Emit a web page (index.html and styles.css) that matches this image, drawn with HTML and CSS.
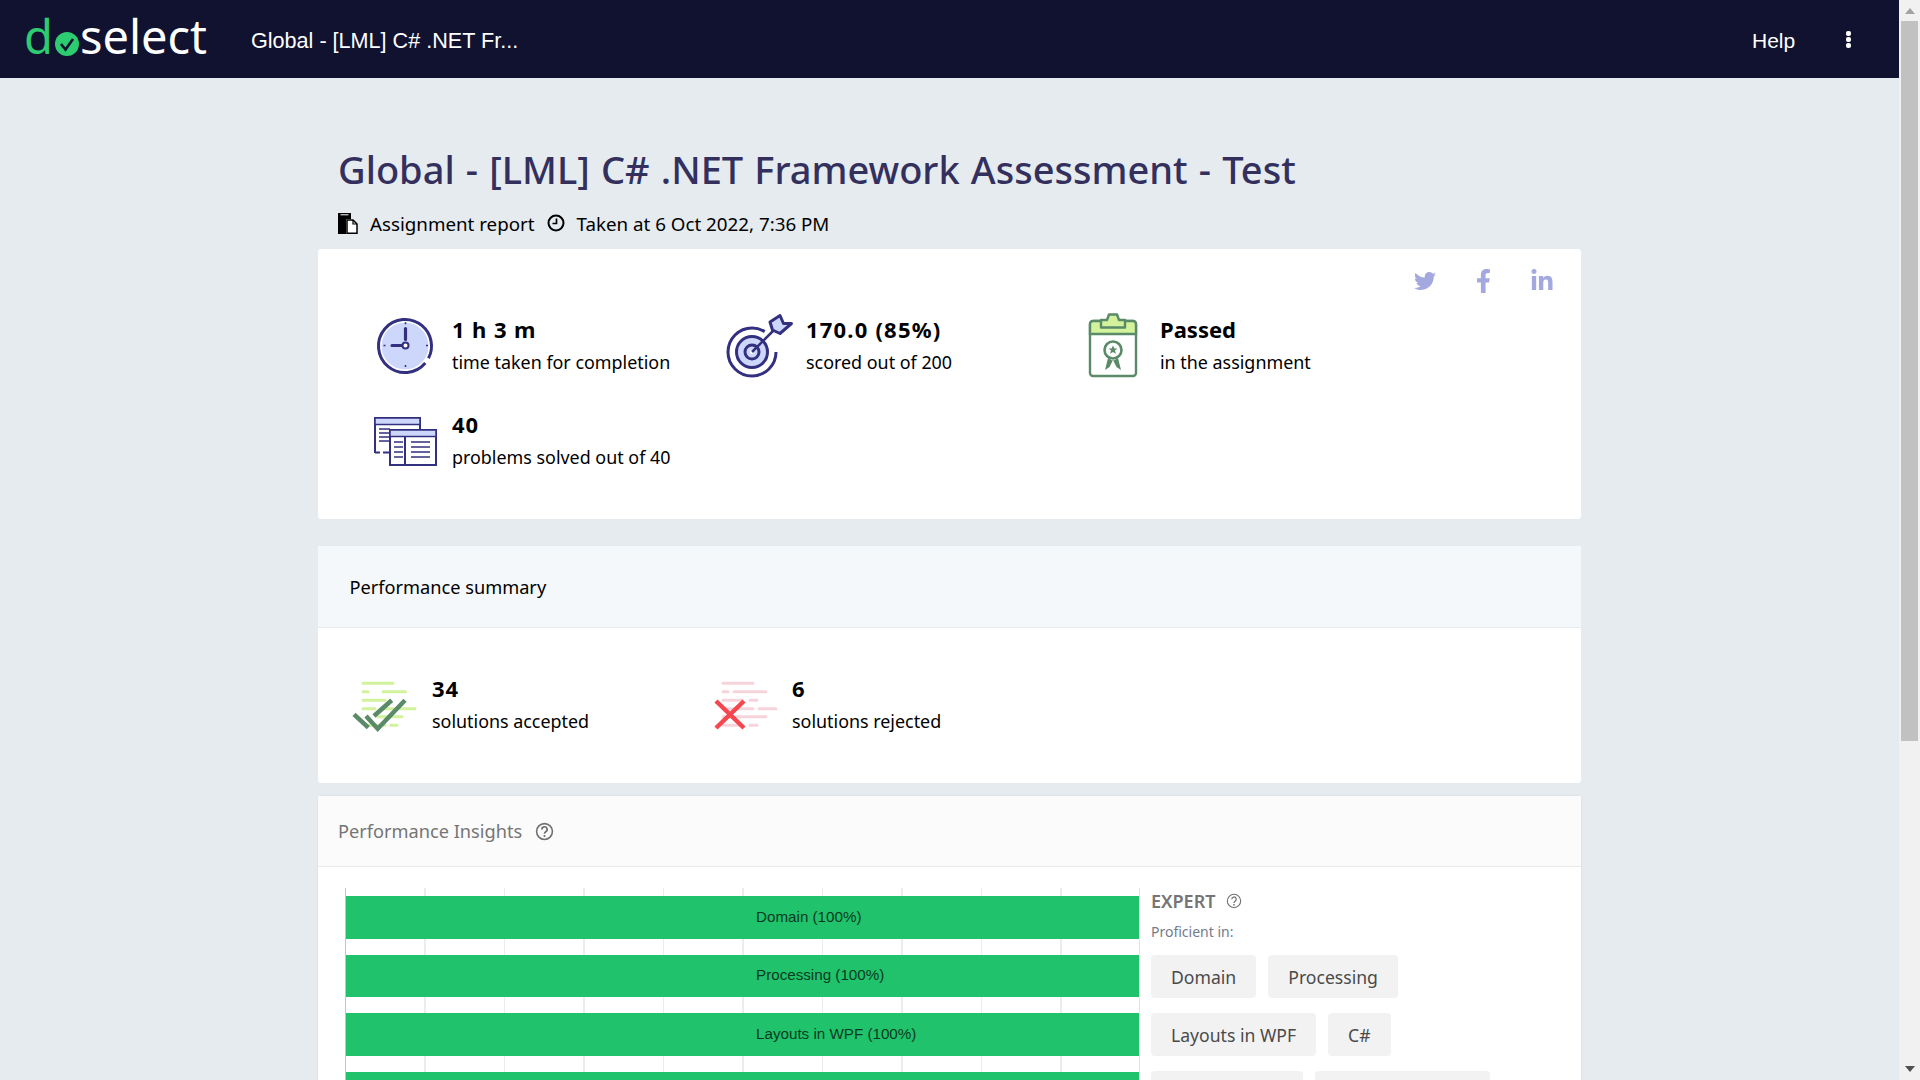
FILE: index.html
```html
<!DOCTYPE html>
<html lang="en">
<head>
<meta charset="utf-8">
<title>Assignment report</title>
<link rel="stylesheet" href="styles.css">
</head>
<body>
<div class="viewport">
  <header class="topbar">
    <div class="logo"><span class="logo-d">d</span><svg class="logo-o" viewBox="0 0 24 24"><circle cx="12" cy="12" r="12" fill="#2ecc71"/><path d="M6 12l4.500 5.500L18 7" fill="none" stroke="#10122f" stroke-width="2.600"/></svg><span class="logo-select">select</span></div>
    <div class="topbar-title">Global - [LML] C# .NET Fr...</div>
    <div class="topbar-help">Help</div>
    <div class="kebab"><i></i><i></i><i></i></div>
  </header>

  <main class="page">
    <h1 class="page-title">Global - [LML] C# .NET Framework Assessment - Test</h1>
    <div class="meta">
      <svg class="meta-doc" viewBox="0 0 20 22"><path d="M0 1h13v6H8v15H0z" fill="#000"/><path d="M2.500 2.800h8" stroke="#fff" stroke-width="1"/><path d="M9 8h6l4 4v9.300H9z" fill="#fff" stroke="#000" stroke-width="1.500"/><path d="M15 8v4h4" fill="none" stroke="#000" stroke-width="1.200"/></svg>
      <span>Assignment report</span>
      <svg class="meta-clock" viewBox="0 0 18 18"><circle cx="9" cy="9" r="7.500" fill="none" stroke="#000" stroke-width="2"/><path d="M9.500 4.500V9.500H5.500" fill="none" stroke="#000" stroke-width="1.700"/></svg>
      <span>Taken at 6 Oct 2022, 7:36 PM</span>
    </div>

    <section class="card stats-card">
      <div class="social">
        <svg class="soc-tw" viewBox="0 0 512 512"><path d="M459.37 151.716c.325 4.548.325 9.097.325 13.645 0 138.72-105.583 298.558-298.558 298.558-59.452 0-114.68-17.219-161.137-47.106 8.447.974 16.568 1.299 25.34 1.299 49.055 0 94.213-16.568 130.274-44.832-46.132-.975-84.792-31.188-98.112-72.772 6.498.974 12.995 1.624 19.818 1.624 9.421 0 18.843-1.3 27.614-3.573-48.081-9.747-84.143-51.98-84.143-102.985v-1.299c13.969 7.797 30.214 12.67 47.431 13.319-28.264-18.843-46.781-51.005-46.781-87.391 0-19.492 5.197-37.36 14.294-52.954 51.655 63.675 129.3 105.258 216.365 109.807-1.624-7.797-2.599-15.918-2.599-24.04 0-57.828 46.782-104.934 104.934-104.934 30.213 0 57.502 12.67 76.67 33.137 23.715-4.548 46.456-13.32 66.599-25.34-7.798 24.366-24.366 44.833-46.132 57.827 21.117-2.273 41.584-8.122 60.426-16.243-14.292 20.791-32.161 39.308-52.628 54.253z"/></svg>
        <svg class="soc-fb" viewBox="0 0 320 512"><path d="M279.14 288l14.22-92.66h-88.91v-60.13c0-25.35 12.42-50.06 52.24-50.06h40.42V6.26S260.43 0 225.36 0c-73.22 0-121.08 44.38-121.08 124.72v70.62H22.89V288h81.39v224h100.17V288z"/></svg>
        <svg class="soc-in" viewBox="0 0 448 512"><path d="M100.28 448H7.4V148.9h92.88zM53.79 108.1C24.09 108.1 0 83.5 0 53.8a53.79 53.79 0 0 1 107.58 0c0 29.7-24.1 54.3-53.79 54.3zM447.9 448h-92.68V302.4c0-34.7-.7-79.2-48.29-79.2-48.29 0-55.69 37.7-55.69 76.7V448h-92.78V148.9h89.08v40.8h1.3c12.4-23.5 42.69-48.3 87.88-48.3 94 0 111.28 61.9 111.28 142.3V448z"/></svg>
      </div>
      <div class="stats-grid">
        <div class="stat">
          <svg class="stat-icon" viewBox="0 0 64 64"><circle cx="32" cy="32" r="23.500" fill="#cdd7fb"/><circle cx="32" cy="32" r="26.500" fill="none" stroke="#32307f" stroke-width="3" stroke-dasharray="159.600 6.900" transform="rotate(40 32 32)"/><path d="M32.500 14.500v11M28.500 31.500H19" fill="none" stroke="#32307f" stroke-width="3.200" stroke-linecap="round"/><circle cx="32.500" cy="31.500" r="3" fill="#fff" stroke="#32307f" stroke-width="2"/><path d="M32.500 8.300v2M32.500 51v2M10.500 31.500h2M53 31.500h2" stroke="#32307f" stroke-width="1.500"/></svg>
          <div class="stat-text"><b class="num">1 h 3 m</b><span>time taken for completion</span></div>
        </div>
        <div class="stat">
          <svg class="stat-icon" viewBox="0 0 64 64"><circle cx="25" cy="38" r="24" fill="none" stroke="#32307f" stroke-width="3" stroke-dasharray="125.700 25.100"/><circle cx="25" cy="38" r="15.500" fill="#cdd7fb" stroke="#32307f" stroke-width="3"/><circle cx="25" cy="38" r="7" fill="#cdd7fb" stroke="#32307f" stroke-width="3"/><circle cx="25" cy="38" r="2" fill="#fff"/><path d="M25 38L47 16" stroke="#32307f" stroke-width="2.500"/><path d="M53 1.500l3.500 8h8L53 19.500l-7.500-3.500-2.500-8z" fill="#cdd7fb" stroke="#32307f" stroke-width="3" stroke-linejoin="round"/></svg>
          <div class="stat-text"><b class="num num-wide">170.0 (85%)</b><span>scored out of 200</span></div>
        </div>
        <div class="stat">
          <svg class="stat-icon" viewBox="0 0 64 64"><rect x="9" y="7" width="46" height="55" rx="3" fill="#fff" stroke="#5a8a68" stroke-width="2.400"/><path d="M9 20V10a3 3 0 0 1 3-3H52a3 3 0 0 1 3 3v10z" fill="#d2f29c" stroke="#5a8a68" stroke-width="2.400"/><path d="M20 13.500V6h6l2-5.500h8l2 5.500h6v7.500z" fill="#d2f29c" stroke="#5a8a68" stroke-width="2.400" stroke-linejoin="round"/><path d="M24 56l3-12 5 3 5-3 3 12-4.500-3-3.500-7-3.500 7z" fill="#5a8a68"/><circle cx="32" cy="36" r="8.500" fill="#fff" stroke="#5a8a68" stroke-width="2.600"/><path d="M32 31.500l1.400 3h3l-2.400 2 .9 3.200-2.900-1.800-2.900 1.800.9-3.200-2.400-2h3z" fill="#5a8a68"/></svg>
          <div class="stat-text"><b>Passed</b><span>in the assignment</span></div>
        </div>
        <div class="stat">
          <svg class="stat-icon" viewBox="0 0 64 64"><g transform="translate(0 4)"><path d="M2 40V5h45v12" fill="#fff" stroke="#32307f" stroke-width="2"/><rect x="2" y="5" width="45" height="6.500" fill="#cdd7fb" stroke="#32307f" stroke-width="1.500"/><path d="M6 16h11M6 20h11M6 24h11M6 28h11" stroke="#32307f" stroke-width="1.500"/><path d="M2 39.500H7M10 39.500h6" stroke="#32307f" stroke-width="2"/><rect x="17" y="17" width="46" height="35" fill="#fff" stroke="#32307f" stroke-width="2"/><rect x="17" y="17" width="46" height="6.500" fill="#cdd7fb" stroke="#32307f" stroke-width="1.500"/><path d="M32 23v29" stroke="#32307f" stroke-width="2"/><path d="M21 29h9M21 34h9M21 39h9M21 44h9M38 29h19M38 34h19M38 39h19M38 44h19" stroke="#32307f" stroke-width="1.600"/></g></svg>
          <div class="stat-text"><b class="num">40</b><span>problems solved out of 40</span></div>
        </div>
      </div>
    </section>

    <section class="card summary-card">
      <div class="summary-head">Performance summary</div>
      <div class="summary-body">
        <div class="sol">
          <svg class="stat-icon" viewBox="0 0 64 64"><path d="M10 10.300h30M10 18.700h5M30 18.700h22.500M10 27.300h22M10 35.700h12M30 35.700h32M25 43.700h24M15 52.300h17M38 52.300h6" stroke="#d2f29c" stroke-width="3" stroke-linecap="round"/><path d="M1 41.300L15.300 54.700M21 43L38.700 27.300M13 43L24.700 55.700 52 27.300" fill="none" stroke="#5a8a68" stroke-width="4.500"/></svg>
          <div class="stat-text"><b class="num">34</b><span>solutions accepted</span></div>
        </div>
        <div class="sol">
          <svg class="stat-icon" viewBox="0 0 64 64"><path d="M10 10.300h30M10 18.700h5M21 18.700h32M10 27.300h19M37 27.300h7M10 35.700h30M46 35.700h17M10 43.700h43M10 52.300h19M37 52.300h7" stroke="#f7d4dc" stroke-width="3" stroke-linecap="round"/><path d="M3 28L31 55M31 28L3 55" stroke="#f4474f" stroke-width="4.500"/></svg>
          <div class="stat-text"><b>6</b><span>solutions rejected</span></div>
        </div>
      </div>
    </section>

    <section class="card insights-card">
      <div class="insights-head">Performance Insights
        <svg class="help help-lg" viewBox="0 0 18 18"><circle cx="9" cy="9" r="7.500" fill="none" stroke="currentColor" stroke-width="1.500"/><path d="M6.500 7a2.500 2.500 0 1 1 3.700 2.200c-.9.500-1.200 1-1.200 2" fill="none" stroke="currentColor" stroke-width="1.600"/><circle cx="9" cy="13.300" r="1" fill="currentColor"/></svg>
      </div>
      <div class="insights-body">
        <div class="chart">
          <div class="bar"><span>Domain (100%)</span></div>
          <div class="bar"><span>Processing (100%)</span></div>
          <div class="bar"><span>Layouts in WPF (100%)</span></div>
          <div class="bar"></div>
        </div>
        <div class="levels">
          <div class="level-name">EXPERT
            <svg class="help help-sm" viewBox="0 0 18 18"><circle cx="9" cy="9" r="7.500" fill="none" stroke="currentColor" stroke-width="1.200"/><path d="M6.500 7a2.500 2.500 0 1 1 3.700 2.200c-.9.500-1.200 1-1.200 2" fill="none" stroke="currentColor" stroke-width="1.400"/><circle cx="9" cy="13.300" r="1" fill="currentColor"/></svg>
          </div>
          <div class="level-sub">Proficient in:</div>
          <div class="tags">
            <span class="tag">Domain</span><span class="tag">Processing</span>
            <span class="tag">Layouts in WPF</span><span class="tag">C#</span>
            <span class="tag tag-blank-a"></span><span class="tag tag-blank-b"></span>
          </div>
        </div>
      </div>
    </section>
  </main>
</div>
<div class="scrollbar">
  <div class="sb-up"></div>
  <div class="sb-track"><div class="sb-thumb"></div></div>
  <div class="sb-down"></div>
</div>
</body>
</html>
```

FILE: styles.css
```css
* { box-sizing: border-box; }
html, body { margin: 0; height: 1080px; overflow: hidden; }
body {
  display: flex;
  font-family: "Noto Sans", "Open Sans", sans-serif;
  color: #000;
  background: #e6ebef;
}
.viewport { width: 1899px; height: 1080px; overflow: hidden; flex: none; }

/* top bar */
.topbar {
  height: 78px;
  background: #10122f;
  display: flex;
  align-items: center;
  padding-left: 24px;
  color: #fff;
  font-family: "Liberation Sans", Arial, sans-serif;
}
.logo { display: flex; align-items: center; width: 227px; height: 78px; padding-bottom: 7px; font-family: "Noto Sans", sans-serif; font-weight: 400; font-size: 47px; color: #fff; }
.logo-d { color: #2ecc71; }
.logo-o { width: 24px; height: 24px; margin: 16px 1px 0 2px; flex: none; }
.topbar-title { font-size: 21.6px; width: 1501px; margin-top: 4px; }
.topbar-help { font-size: 21px; width: 94px; margin-top: 4px; }
.kebab { display: flex; flex-direction: column; gap: 1px; margin-top: 1px; }
.kebab i { display: block; width: 5px; height: 5px; border-radius: 2px; background: #fff; }

/* page */
.page { width: 1263px; margin-left: 318px; }
.page-title { margin: 0; padding: 65px 0 0 20px; font-size: 38px; line-height: 52px; font-weight: 500; word-spacing: 1.300px; color: #33305e; }
.meta { display: flex; align-items: center; height: 28px; margin-top: 14px; padding-left: 20px; font-size: 18.750px; }
.meta-doc { width: 20px; height: 22px; margin-right: 12px; }
.meta-clock { width: 18px; height: 18px; margin: 0 12px; }

.card { background: #fff; border-radius: 3px; }
.stats-card { position: relative; height: 270px; margin-top: 12px; padding: 49px 0 0 55px; }
.social { position: absolute; top: 20px; right: 28px; display: flex; align-items: center; gap: 40px; fill: #a3a9df; }
.soc-tw { width: 22px; height: 24px; }
.soc-fb { width: 15px; height: 24px; }
.soc-in { width: 22px; height: 24px; }
.stats-grid { display: grid; grid-template-columns: 354px 354px 354px; grid-auto-rows: 95px; }
.stat { display: flex; align-items: center; }
.stat-icon { width: 64px; height: 64px; margin-right: 15px; flex: none; overflow: visible; }
.stat-text { display: flex; flex-direction: column; font-size: 17.900px; line-height: 32px; }
.stat-text b { font-size: 22px; font-weight: 700; line-height: 30px; margin-bottom: 2px; }
.stat-text .num { letter-spacing: .9px; }
.stat-text .num-wide { letter-spacing: 1.200px; }

.summary-card { height: 237px; margin-top: 27px; }
.summary-head { height: 82px; background: #f5f8fa; border-bottom: 1px solid #e6ebef; padding: 0 31.500px; display: flex; align-items: center; font-size: 18.200px; }
.summary-body { display: flex; padding: 45px 0 0 35px; }
.sol { display: flex; align-items: center; width: 360px; }

.insights-card { height: 290px; margin-top: 13px; box-shadow: 0 0 3px rgba(0,0,0,.08); }
.insights-head { height: 71px; background: #fbfbfc; border-bottom: 1px solid #e9e9e9; padding-left: 20px; display: flex; align-items: center; font-size: 18.200px; color: #757575; }
.help { flex: none; color: #6f6f6f; }
.help-lg { width: 19px; height: 19px; margin-left: 13px; }
.help-sm { width: 16px; height: 16px; margin-left: 11px; }
.insights-body { display: flex; }

.chart {
  width: 795px;
  height: 220px;
  margin: 21px 0 0 27px;
  padding: 8px 0 0;
  border-left: 1px solid #c4c4c4;
  border-right: 1px solid #e4e4e4;
  background-image: repeating-linear-gradient(90deg, transparent 0, transparent 78.300px, #ececec 78.300px, #ececec 79.500px);
  display: flex;
  flex-direction: column;
  gap: 16px;
  flex: none;
}
.bar { flex: none; height: 42.670px; background: #20c26b; display: flex; align-items: center; padding: 0 0 2px 410px; font-family: "Liberation Sans", Arial, sans-serif; font-size: 15.200px; color: #0a3a20; }

.levels { padding: 22px 0 0 11px; width: 430px; }
.level-name { display: flex; align-items: center; font-size: 18px; font-weight: 600; color: #757575; line-height: 24px; }
.level-sub { font-size: 14px; color: #747b8b; margin-top: 8px; line-height: 22px; }
.tags { display: flex; flex-wrap: wrap; gap: 15px 12px; margin-top: 12px; width: 400px; }
.tag { height: 43px; padding: 0 20px; display: flex; align-items: center; background: #f2f2f3; border-radius: 4px; font-size: 17.600px; color: #4a4a4a; }
.tag-blank-a { width: 152px; }
.tag-blank-b { width: 175px; }

/* scrollbar */
.scrollbar { width: 21px; height: 1080px; flex: none; background: #f1f1f1; display: flex; flex-direction: column; align-items: center; }
.sb-up, .sb-down { flex: none; width: 0; border: 0 solid transparent; }
.sb-up { height: 0; margin: 8px 0 5px; border-width: 0 5px 6px; border-bottom-color: #a3a3a3; }
.sb-track { flex: 1; width: 17px; }
.sb-thumb { height: 720px; background: #c1c1c1; margin-top: 2px; }
.sb-down { height: 0; margin: 5px 0 8px; border-width: 6px 5px 0; border-top-color: #505050; }
```
